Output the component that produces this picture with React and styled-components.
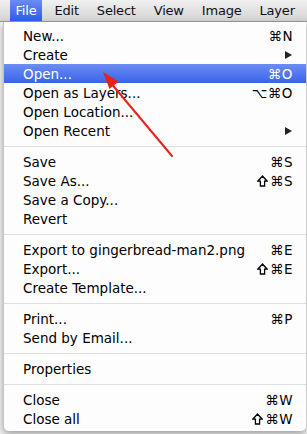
import React from "react";
import styled, { createGlobalStyle } from "styled-components";

const GlobalStyle = createGlobalStyle`
  html, body { margin: 0; padding: 0; }
  body {
    background: #f0f0f0;
    font-family: "DejaVu Sans", "Liberation Sans", sans-serif;
    -webkit-font-smoothing: antialiased;
  }
`;

const Page = styled.div`
  position: relative;
  width: 307px;
  height: 434px;
  overflow: hidden;
  background: #f2f2f2;
`;

const MenuBar = styled.div`
  display: flex;
  align-items: stretch;
  gap: 7px;
  height: 21px;
  padding-left: 10px;
  background: linear-gradient(#f1f1f1, #d3d3d3);
  border-bottom: 1px solid #9b9b9b;
`;

const MenuTitle = styled.div`
  display: flex;
  align-items: center;
  padding: 0 5.5px;
  font-size: 13px;
  letter-spacing: -0.2px;
  color: ${(p) => (p.$active ? "#fff" : "#111")};
  background: ${(p) =>
    p.$active ? "linear-gradient(#6a8cf4, #2e5ae8)" : "transparent"};
`;

const Menu = styled.div`
  margin-left: 3px;
  width: 303px;
  padding: 4px 0 3px;
  background: #fdfdfd;
  border-left: 1px solid #c4c4c4;
  border-radius: 0 0 5px 5px;
  box-shadow: 0 3px 7px rgba(0, 0, 0, 0.35);
  box-sizing: border-box;
`;

const Row = styled.div`
  display: flex;
  align-items: center;
  justify-content: space-between;
  height: 19px;
  padding: 0 13px 0 19px;
  font-size: 13.5px;
  color: ${(p) => (p.$selected ? "#fff" : "#000")};
  background: ${(p) =>
    p.$selected ? "linear-gradient(#6b8df4, #3a63ea)" : "transparent"};
`;

const Shortcut = styled.span`
  display: flex;
  align-items: center;
  gap: 1px;
  font-size: 13.5px;
  letter-spacing: 0.5px;
`;

const ShiftIcon = styled.svg`
  width: 11px;
  height: 12px;
  margin-right: 1px;
`;

const SubArrow = styled.span`
  width: 0;
  height: 0;
  margin-right: 1px;
  border-left: 7px solid #222;
  border-top: 4.5px solid transparent;
  border-bottom: 4.5px solid transparent;
`;

const Separator = styled.div`
  height: 12px;
  position: relative;
  &::after {
    content: "";
    position: absolute;
    left: 0;
    right: 0;
    top: 6px;
    height: 1px;
    background: #dedede;
  }
`;

const Overlay = styled.svg`
  position: absolute;
  left: 0;
  top: 0;
  pointer-events: none;
`;

const Shift = () => (
  <ShiftIcon viewBox="0 0 11 12">
    <path
      d="M5.5 1 L10.2 6.2 H7.6 V11 H3.4 V6.2 H0.8 Z"
      fill="none"
      stroke="currentColor"
      strokeWidth="1.3"
      strokeLinejoin="miter"
    />
  </ShiftIcon>
);

const titles = ["File", "Edit", "Select", "View", "Image", "Layer"];

const items = [
  { label: "New...", sc: "⌘N" },
  { label: "Create", sub: true },
  { label: "Open...", sc: "⌘O", selected: true },
  { label: "Open as Layers...", sc: "⌥⌘O" },
  { label: "Open Location..." },
  { label: "Open Recent", sub: true },
  { sep: true },
  { label: "Save", sc: "⌘S" },
  { label: "Save As...", sc: "⌘S", shift: true },
  { label: "Save a Copy..." },
  { label: "Revert" },
  { sep: true },
  { label: "Export to gingerbread-man2.png", sc: "⌘E" },
  { label: "Export...", sc: "⌘E", shift: true },
  { label: "Create Template..." },
  { sep: true },
  { label: "Print...", sc: "⌘P" },
  { label: "Send by Email..." },
  { sep: true },
  { label: "Properties" },
  { sep: true },
  { label: "Close", sc: "⌘W" },
  { label: "Close all", sc: "⌘W", shift: true },
];

export default function App() {
  return (
    <>
      <GlobalStyle />
      <Page>
        <MenuBar>
          {titles.map((t, i) => (
            <MenuTitle key={t} $active={i === 0}>
              {t}
            </MenuTitle>
          ))}
        </MenuBar>
        <Menu>
          {items.map((it, i) =>
            it.sep ? (
              <Separator key={i} />
            ) : (
              <Row key={i} $selected={it.selected}>
                <span>{it.label}</span>
                {it.sc && (
                  <Shortcut>
                    {it.shift && <Shift />}
                    {it.sc}
                  </Shortcut>
                )}
                {it.sub && <SubArrow />}
              </Row>
            )
          )}
        </Menu>
        <Overlay width="307" height="434" viewBox="0 0 307 434">
          <line
            x1="172"
            y1="156"
            x2="110"
            y2="82"
            stroke="#e5221b"
            strokeWidth="2"
            strokeLinecap="round"
          />
          <polygon points="103,72 109.5,89 118.5,81.5" fill="#e5221b" />
        </Overlay>
      </Page>
    </>
  );
}
